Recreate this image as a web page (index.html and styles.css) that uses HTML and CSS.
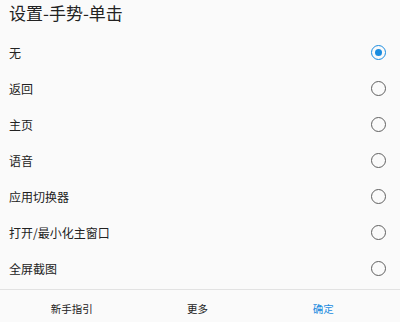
FILE: index.html
```html
<!DOCTYPE html>
<html lang="zh-CN">
<head>
    <meta charset="UTF-8">
    <meta name="viewport" content="width=device-width, initial-scale=1.0">
    <title>设置-手势-单击</title>
    <link rel="stylesheet" href="styles.css">
</head>
<body>
    <div class="dialog">
        <h1 class="title">设置-手势-单击</h1>
        <ul class="options">
            <li class="option checked"><span>无</span><i class="radio"></i></li>
            <li class="option"><span>返回</span><i class="radio"></i></li>
            <li class="option"><span>主页</span><i class="radio"></i></li>
            <li class="option"><span>语音</span><i class="radio"></i></li>
            <li class="option"><span>应用切换器</span><i class="radio"></i></li>
            <li class="option"><span>打开/最小化主窗口</span><i class="radio"></i></li>
            <li class="option"><span>全屏截图</span><i class="radio"></i></li>
        </ul>
        <div class="buttons">
            <button class="btn">新手指引</button>
            <button class="btn">更多</button>
            <button class="btn primary">确定</button>
        </div>
    </div>
</body>
</html>
```

FILE: styles.css
```css
html, body {
    margin: 0;
    padding: 0;
    height: 322px;
    overflow: hidden;
    background-color: #fafafa;
    font-family: "Noto Sans CJK SC", "Noto Sans", sans-serif;
    color: #222;
}
.dialog {
    display: flex;
    flex-direction: column;
}
.title {
    margin: 0;
    padding: 0 9px 8px;
    font-size: 17px;
    font-weight: normal;
    line-height: 26px;
}
.options {
    list-style: none;
    margin: 0;
    padding: 0 0 3px;
}
.option {
    display: flex;
    align-items: center;
    justify-content: space-between;
    height: 36px;
    padding: 0 14px 0 9px;
    font-size: 12px;
}
.radio {
    box-sizing: border-box;
    width: 15px;
    height: 15px;
    border: 1.4px solid #606060;
    border-radius: 50%;
    display: flex;
    align-items: center;
    justify-content: center;
}
.option.checked .radio {
    border-color: #1a8ce0;
}
.option.checked .radio::after {
    content: "";
    width: 7px;
    height: 7px;
    border-radius: 50%;
    background-color: #1a8ce0;
}
.buttons {
    display: flex;
    border-top: 1px solid #e2e2e2;
    padding: 3px 14px 0 9px;
    height: 32px;
}
.btn {
    flex: 1;
    border: none;
    background: none;
    padding: 0;
    font-family: inherit;
    font-size: 10.5px;
    color: #222;
    line-height: 28px;
}
.btn.primary {
    color: #1a8ce0;
}
```
